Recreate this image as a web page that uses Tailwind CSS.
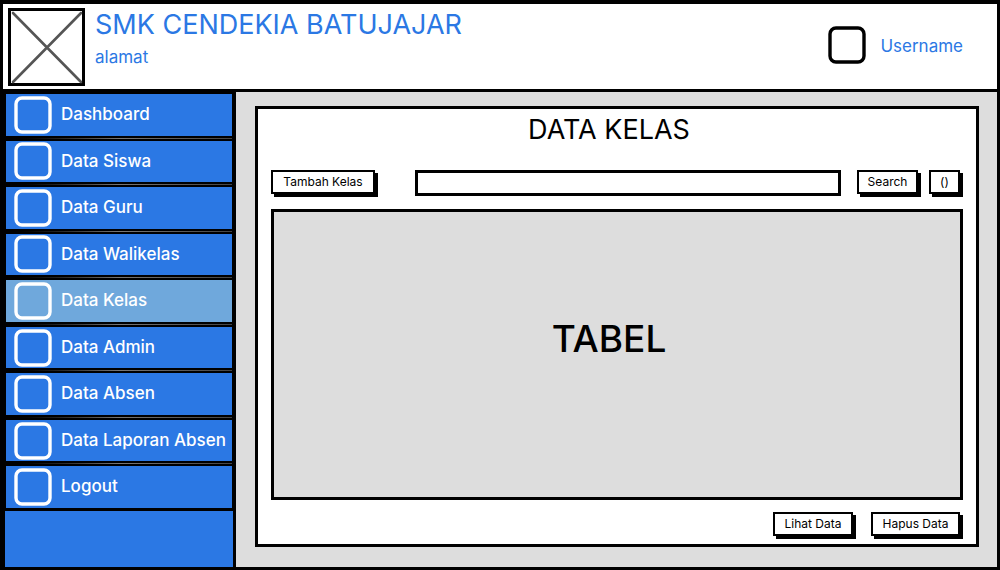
<!DOCTYPE html>
<html lang="id">
<head>
<meta charset="utf-8">
<meta name="viewport" content="width=device-width, initial-scale=1">
<title>Data Kelas</title>
<script src="https://cdn.jsdelivr.net/npm/@tailwindcss/browser@4"></script>
</head>
<body class="font-['Inter',sans-serif] text-black">
<svg class="hidden">
  <symbol id="box" viewBox="0 0 38 38"><rect x="2" y="2" width="34" height="34" rx="6" fill="none" stroke="currentColor" stroke-width="3.4"/></symbol>
</svg>
<div class="flex min-h-screen flex-col border-t-4 border-r-3 border-b-3 border-l-3 border-black bg-[#ddd]">
  <header class="flex h-[88px] items-start border-b-3 border-black bg-white pt-1 pr-[34px] pl-[5px] text-[#2b78e4]">
    <svg class="h-[78px] w-[77px] shrink-0" viewBox="0 0 77 78" role="img" aria-label="Logo">
      <rect x="1.5" y="1.5" width="74" height="75" fill="#fff" stroke="#000" stroke-width="3"/>
      <path d="M5 5L73 74M73 5L5 74" stroke="#555" stroke-width="2.6" stroke-linecap="round"/>
    </svg>
    <div class="ml-[10px] grow">
      <h1 class="text-[27px] leading-[34px]">SMK CENDEKIA BATUJAJAR</h1>
      <p class="text-[17px] leading-[30px]">alamat</p>
    </div>
    <div class="flex items-center gap-[14px] pt-[18px]">
      <svg class="size-[38px] text-black"><use href="#box"/></svg>
      <span class="pt-[3px] text-[17px]">Username</span>
    </div>
  </header>
  <div class="flex grow">
    <nav class="w-[233px] shrink-0 border-r-3 border-l-2 border-black bg-[#2b78e4] text-white">
      <ul class="grid h-[419px] auto-rows-fr gap-[5px] bg-black pt-[2px] pr-px pb-[3px] pl-px text-[17px] font-medium">
        <li class="relative grid after:absolute after:inset-x-0 after:-bottom-[3px] after:h-px after:bg-linear-to-r after:from-black after:via-[#777] after:to-[#444]"><a href="#" class="flex items-center gap-[9px] bg-[#2b78e4] pl-2 whitespace-nowrap"><svg class="size-[38px] shrink-0"><use href="#box"/></svg>Dashboard</a></li>
        <li class="relative grid after:absolute after:inset-x-0 after:-bottom-[3px] after:h-px after:bg-linear-to-r after:from-black after:via-[#777] after:to-[#444]"><a href="#" class="flex items-center gap-[9px] bg-[#2b78e4] pl-2 whitespace-nowrap"><svg class="size-[38px] shrink-0"><use href="#box"/></svg>Data Siswa</a></li>
        <li class="relative grid after:absolute after:inset-x-0 after:-bottom-[3px] after:h-px after:bg-linear-to-r after:from-black after:via-[#777] after:to-[#444]"><a href="#" class="flex items-center gap-[9px] bg-[#2b78e4] pl-2 whitespace-nowrap"><svg class="size-[38px] shrink-0"><use href="#box"/></svg>Data Guru</a></li>
        <li class="relative grid after:absolute after:inset-x-0 after:-bottom-[3px] after:h-px after:bg-linear-to-r after:from-black after:via-[#777] after:to-[#444]"><a href="#" class="flex items-center gap-[9px] bg-[#2b78e4] pl-2 whitespace-nowrap"><svg class="size-[38px] shrink-0"><use href="#box"/></svg>Data Walikelas</a></li>
        <li class="relative grid after:absolute after:inset-x-0 after:-bottom-[3px] after:h-px after:bg-linear-to-r after:from-black after:via-[#777] after:to-[#444]"><a href="#" aria-current="page" class="flex items-center gap-[9px] bg-[#6fa8dc] pl-2 whitespace-nowrap"><svg class="size-[38px] shrink-0"><use href="#box"/></svg>Data Kelas</a></li>
        <li class="relative grid after:absolute after:inset-x-0 after:-bottom-[3px] after:h-px after:bg-linear-to-r after:from-black after:via-[#777] after:to-[#444]"><a href="#" class="flex items-center gap-[9px] bg-[#2b78e4] pl-2 whitespace-nowrap"><svg class="size-[38px] shrink-0"><use href="#box"/></svg>Data Admin</a></li>
        <li class="relative grid after:absolute after:inset-x-0 after:-bottom-[3px] after:h-px after:bg-linear-to-r after:from-black after:via-[#777] after:to-[#444]"><a href="#" class="flex items-center gap-[9px] bg-[#2b78e4] pl-2 whitespace-nowrap"><svg class="size-[38px] shrink-0"><use href="#box"/></svg>Data Absen</a></li>
        <li class="relative grid after:absolute after:inset-x-0 after:-bottom-[3px] after:h-px after:bg-linear-to-r after:from-black after:via-[#777] after:to-[#444]"><a href="#" class="flex items-center gap-[9px] bg-[#2b78e4] pl-2 whitespace-nowrap"><svg class="size-[38px] shrink-0"><use href="#box"/></svg>Data Laporan Absen</a></li>
        <li class="grid"><a href="#" class="flex items-center gap-[9px] bg-[#2b78e4] pl-2 whitespace-nowrap"><svg class="size-[38px] shrink-0"><use href="#box"/></svg>Logout</a></li>
      </ul>
    </nav>
    <main class="flex grow pt-[14px] pr-[18px] pb-5 pl-[19px]">
      <section class="flex grow flex-col border-3 border-black bg-white px-[13px] pt-1 pb-2">
        <h2 class="pr-4 text-center text-[27px] leading-[34px]">DATA KELAS</h2>
        <div class="mt-[23px] flex h-[26px] items-start">
          <button type="button" class="h-6 w-[104px] border-2 border-black bg-white text-xs shadow-[3px_3px_0_#000]">Tambah Kelas</button>
          <input type="text" aria-label="Cari kelas" class="ml-10 h-[26px] min-w-0 grow border-3 border-black bg-white px-2 text-xs">
          <button type="button" class="ml-4 h-6 w-[61px] border-2 border-black bg-white text-xs shadow-[3px_3px_0_#000]">Search</button>
          <button type="button" class="mr-[3px] ml-[11px] h-6 w-[31px] border-2 border-black bg-white text-xs shadow-[3px_3px_0_#000]">()</button>
        </div>
        <div class="mt-[13px] flex grow items-center justify-center border-3 border-black bg-[#ddd] pr-4 pb-8">
          <p class="text-[37px] font-medium">TABEL</p>
        </div>
        <div class="mt-3 mr-[3px] flex justify-end gap-[18px]">
          <button type="button" class="h-6 w-[80px] border-2 border-black bg-white text-xs shadow-[3px_3px_0_#000]">Lihat Data</button>
          <button type="button" class="h-6 w-[89px] border-2 border-black bg-white text-xs shadow-[3px_3px_0_#000]">Hapus Data</button>
        </div>
      </section>
    </main>
  </div>
</div>
</body>
</html>
